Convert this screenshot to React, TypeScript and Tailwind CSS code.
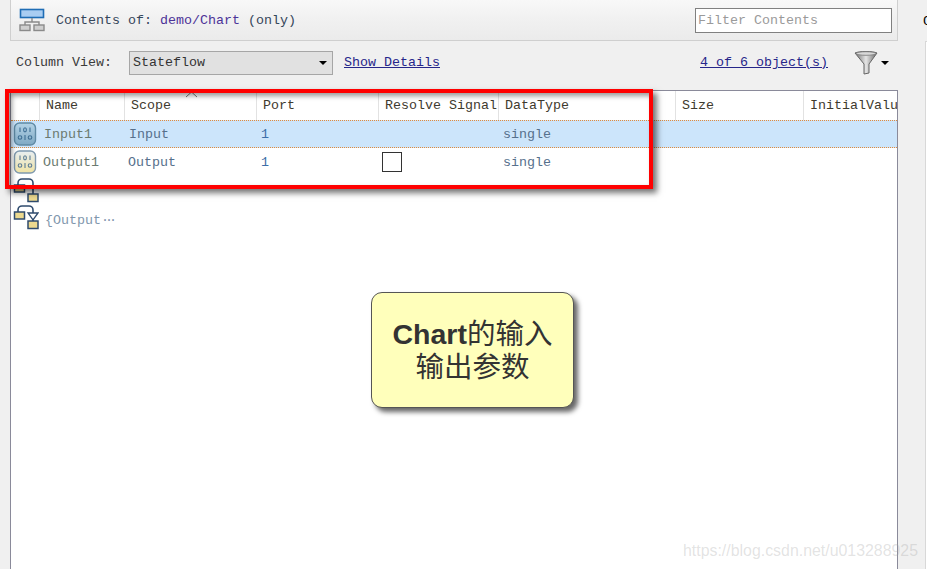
import React from 'react';

const mono = "font-['Liberation_Mono',monospace] text-[13.33px]";

const columns = 'grid grid-cols-[29px_85px_132px_122px_120px_177px_128px_93px]';

const TreeIcon = () => (
  <svg width="26" height="24" viewBox="0 0 26 24">
    <rect x="1.5" y="1.5" width="23" height="8" fill="#a9cdf2" stroke="#1f6db5" strokeWidth="1.6" />
    <path d="M13 10v4M6 17v-3h14v3" fill="none" stroke="#8a8a8a" strokeWidth="1.4" />
    <rect x="1" y="17" width="10" height="5.5" fill="#cfcfcf" stroke="#8a8a8a" strokeWidth="1.4" />
    <rect x="15" y="17" width="10" height="5.5" fill="#cfcfcf" stroke="#8a8a8a" strokeWidth="1.4" />
  </svg>
);

const PortIcon = ({ id, from, to, border, ink }: { id: string; from: string; to: string; border: string; ink: string }) => (
  <svg width="24" height="24" viewBox="0 0 24 24">
    <defs>
      <linearGradient id={id} x1="0" y1="0" x2="0" y2="1">
        <stop offset="0" stopColor={from} />
        <stop offset="1" stopColor={to} />
      </linearGradient>
    </defs>
    <rect x="1.5" y="1" width="21" height="22" rx="5" fill={`url(#${id})`} stroke={border} strokeWidth="1.4" />
    <g fill="none" stroke={ink} strokeWidth="1.1">
      <path d="M7 5.5v4.5M17 5.5v4.5" />
      <ellipse cx="12" cy="7.8" rx="1.4" ry="2.1" />
      <ellipse cx="7" cy="15.5" rx="1.8" ry="1.7" />
      <path d="M12 13v5" />
      <ellipse cx="17" cy="15.5" rx="1.8" ry="1.7" />
    </g>
  </svg>
);

const BlockIcon = ({ dropped }: { dropped?: boolean }) => (
  <svg width="26" height="26" viewBox="0 0 26 26">
    <path d="M5 8V6a4 4 0 0 1 4-4h7a4 4 0 0 1 4 4v11" fill="none" stroke="#2f4b6e" strokeWidth="1.6" />
    {dropped && <path d="M15 9h10l-5 7z" fill="#fff" stroke="#2f4b6e" strokeWidth="1.3" />}
    <rect x="1.5" y="8" width="10" height="7" fill="#ecd98f" stroke="#2f4b6e" strokeWidth="1.5" />
    <rect x="15" y="17" width="10" height="7.5" fill="#ecd98f" stroke="#2f4b6e" strokeWidth="1.5" />
  </svg>
);

const Funnel = () => (
  <svg width="24" height="25" viewBox="0 0 24 25">
    <defs>
      <linearGradient id="fn" x1="0" y1="0" x2="1" y2="0">
        <stop offset="0" stopColor="#6e6e6e" />
        <stop offset="0.5" stopColor="#e5e5e5" />
        <stop offset="1" stopColor="#666" />
      </linearGradient>
    </defs>
    <path d="M1 3c4-2 18-2 22 0l-8 11v9l-5 1V14z" fill="url(#fn)" stroke="#666" />
    <ellipse cx="12" cy="3.5" rx="10" ry="1.8" fill="#d8d8d8" stroke="#777" strokeWidth="0.8" />
  </svg>
);

const Header = () => (
  <div className="h-[41px] flex items-center justify-between pl-[8px] pr-[5px] border-l border-b border-r border-[#cfcfcf] bg-gradient-to-b from-[#f8f8f8] via-[#f1f1f1] via-45% to-[#ebebeb]">
    <div className="flex items-center">
      <TreeIcon />
      <span className={`ml-[11px] pt-[2px] text-[#34465a] ${mono}`}>
        Contents of: <span className="text-[#4c3398]">demo/Chart</span> (only)
      </span>
    </div>
    <input
      readOnly
      placeholder="Filter Contents"
      className={`w-[197px] h-[25px] px-[2px] bg-white border border-[#808080] outline-none placeholder:text-[#9a9a9a] ${mono}`}
    />
  </div>
);

const Toolbar = () => (
  <div className="h-[49px] flex items-center pl-[6px] pr-[9px] pb-[7px] pt-[1px]">
    <span className={`w-[113px] text-[#3a3a3a] ${mono}`}>Column View:</span>
    <div className="w-[204px] h-[24px] flex items-center justify-between pl-[3px] pr-[5px] bg-[#e1e1e1] border border-[#a6a6a6]">
      <span className={`text-[#333] ${mono}`}>Stateflow</span>
      <span className="w-0 h-0 border-x-[4px] border-x-transparent border-t-[4px] border-t-black" />
    </div>
    <a className={`ml-[11px] pt-[1px] text-[#26268a] underline ${mono}`}>Show Details</a>
    <a className={`ml-auto pt-[1px] text-[#26268a] underline ${mono}`}>4 of 6 object(s)</a>
    <span className="ml-[26px]"><Funnel /></span>
    <span className="ml-[3px] w-0 h-0 border-x-[4px] border-x-transparent border-t-[4px] border-t-black" />
  </div>
);

const headers = ['Name', 'Scope', 'Port', 'Resolve Signal', 'DataType', 'Size', 'InitialValue'];

const rowText = `${mono} pt-[2px] text-[#56708c]`;

const Table = () => (
  <div className="relative flex-1 bg-white border-x border-t border-[#8a8a9a] overflow-hidden">
    <div className={`${columns} h-[29px]`}>
      <div className="border-r border-[#e2e2e2]" />
      {headers.map((h, i) => (
        <div key={h} className={`relative overflow-hidden whitespace-nowrap flex items-center pt-[1px] pl-[6px] text-[#3e3a2e] ${mono} ${i < 6 ? 'border-r border-[#e2e2e2]' : ''}`}>
          {h}
          {h === 'Scope' && (
            <svg className="absolute left-[60px] top-0" width="13" height="7" viewBox="0 0 13 7">
              <path d="M1 6l5.5-5L12 6" fill="none" stroke="#777" />
            </svg>
          )}
        </div>
      ))}
    </div>
    <div className={`${columns} h-[28px] items-center bg-[#cce5fb] border-y border-dotted border-[#e08a3c]`}>
      <div className="pl-[2px] flex"><PortIcon id="inport" from="#b4d3e6" to="#7fa9c4" border="#5f8aa5" ink="#3f6f94" /></div>
      <span className={`pl-[4px] ${mono} pt-[2px] text-[#6b7a70]`}>Input1</span>
      <span className={`pl-[4px] ${rowText}`}>Input</span>
      <span className={`pl-[4px] pt-[2px] text-[#3c6ea8] ${mono}`}>1</span>
      <span />
      <span className={`pl-[4px] ${rowText}`}>single</span>
    </div>
    <div className={`${columns} h-[28px] items-center`}>
      <div className="pl-[2px] flex"><PortIcon id="outport" from="#e8eef2" to="#f0e3a4" border="#7f99ae" ink="#5d7d96" /></div>
      <span className={`pl-[3px] ${mono} pt-[2px] text-[#6b7a70]`}>Output1</span>
      <span className={`pl-[3px] ${rowText}`}>Output</span>
      <span className={`pl-[4px] pt-[2px] text-[#3c6ea8] ${mono}`}>1</span>
      <div className="pl-[3px] flex"><div className="w-[20px] h-[20px] border border-[#333] bg-white" /></div>
      <span className={`pl-[4px] ${rowText}`}>single</span>
    </div>
    <div className={`${columns} h-[28px]`}>
      <div className="pl-[2px] pt-[1px] flex"><BlockIcon /></div>
    </div>
    <div className={`${columns} h-[28px]`}>
      <div className="pl-[2px] flex"><BlockIcon dropped /></div>
      <span className={`pl-[5px] pt-[7px] whitespace-nowrap text-[#8197ad] ${mono}`}>
        {'{Output'}<span className="tracking-[-4px]">···</span>
      </span>
    </div>
  </div>
);

export default function App() {
  return (
    <div className="relative w-[927px] h-[569px] overflow-hidden bg-[#f0f0f0] flex">
      <div className="ml-[10px] w-[888px] flex flex-col">
        <Header />
        <Toolbar />
        <Table />
      </div>
      <div className="flex-1 flex flex-col">
        <span className={`ml-[25px] h-[41px] pt-[2px] flex items-center text-black ${mono}`}>C</span>
        <div className="ml-[27px] flex-1 bg-white border-l border-t border-[#d8d8d8]" />
      </div>

      <div className="absolute left-[5px] top-[89px] w-[648px] h-[100px] border-[4.5px] border-[#ff0000] shadow-[4px_4px_6px_rgba(0,0,0,0.55),inset_3px_3px_5px_rgba(0,0,0,0.4)]" />

      <div className="absolute left-[371px] top-[292px] w-[203px] h-[116px] pt-[2px] flex flex-col items-center justify-center rounded-[11px] bg-[#ffffbb] border border-[#555] shadow-[4px_4px_5px_rgba(0,0,0,0.6)] text-[#333] text-[28.5px] leading-[33px] font-['Liberation_Sans','Noto_Sans_CJK_SC',sans-serif]">
        <div><span className="font-bold">Chart</span>的输入</div>
        <div>输出参数</div>
      </div>

      <div className="absolute left-[683px] top-[541px] text-[15.9px] leading-[20px] text-[#a0a0a0]/30 font-['Liberation_Sans',sans-serif]">
        https://blog.csdn.net/u013288925
      </div>
    </div>
  );
}
